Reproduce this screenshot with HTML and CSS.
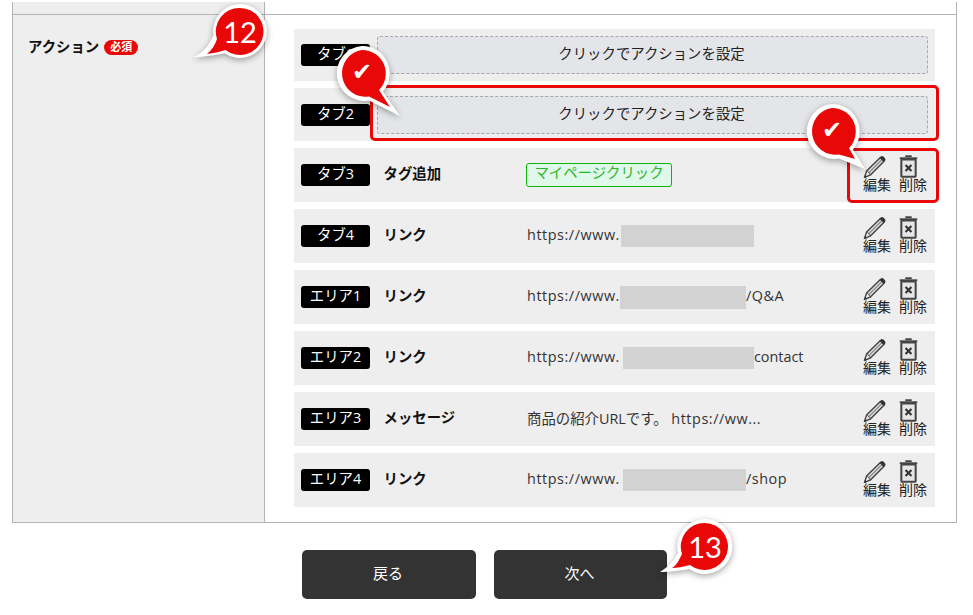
FILE: index.html
```html
<!DOCTYPE html>
<html lang="ja">
<head>
<meta charset="utf-8">
<title>アクション</title>
<link rel="stylesheet" href="styles.css">
</head>
<body>
<svg class="defs" width="0" height="0" aria-hidden="true">
  <defs>
    <symbol id="pencil" viewBox="0 0 24 24">
      <path d="M3.200 16.800 17.600 2.600l3.800 3.800L7.200 20.800z" fill="#d8d8d8" stroke="#444" stroke-width="1.500" stroke-linejoin="round"/>
      <path d="M5.200 18.800 19.400 4.600" stroke="#555" stroke-width="1" fill="none"/>
      <path d="M17.800 1.800c1-1 2.200-1 3.200 0l1.200 1.200c1 1 1 2.200 0 3.200l-1 1-4.400-4.400z" fill="#333"/>
      <path d="M3.200 16.800 1 23.500l6.200-2.700" fill="#eee" stroke="#444" stroke-width="1.500" stroke-linejoin="round"/>
      <path d="M.8 23.700 1.600 20.800l2 2z" fill="#333"/>
    </symbol>
    <symbol id="trash" viewBox="0 0 20 25">
      <path d="M6.500 1.300h7" stroke="#444" stroke-width="2" fill="none"/>
      <path d="M.5 3.600h19" stroke="#444" stroke-width="2.200" fill="none"/>
      <rect x="2.200" y="5" width="15.600" height="18.700" rx="1" fill="#e6e6e6" stroke="#444" stroke-width="2.200"/>
      <path d="M6.800 11l6.400 6.400M13.200 11l-6.400 6.400" stroke="#333" stroke-width="2.300" fill="none"/>
    </symbol>
  </defs>
</svg>

<main class="page">
  <section class="form-table">
    <div class="top-row"><div class="top-head"></div><div></div></div>
    <div class="main-row">
      <div class="head">
        <span class="head-title">アクション</span>
        <span class="required">必須</span>
      </div>
      <div class="list">
        <div class="row row-first">
          <span class="pill">タブ1</span>
          <button class="setter">クリックでアクションを設定</button>
        </div>
        <div class="row row-second">
          <span class="pill">タブ2</span>
          <button class="setter">クリックでアクションを設定</button>
        </div>
        <div class="row">
          <span class="pill">タブ3</span>
          <span class="kind">タグ追加</span>
          <div class="value"><span class="tag">マイページクリック</span></div>
          <div class="actions">
            <a class="act"><svg class="ico-pencil"><use href="#pencil"/></svg><span>編集</span></a>
            <a class="act"><svg class="ico-trash"><use href="#trash"/></svg><span>削除</span></a>
          </div>
        </div>
        <div class="row">
          <span class="pill">タブ4</span>
          <span class="kind">リンク</span>
          <div class="value"><span class="vt url">https://www.</span><span class="mask mask-a"></span></div>
          <div class="actions">
            <a class="act"><svg class="ico-pencil"><use href="#pencil"/></svg><span>編集</span></a>
            <a class="act"><svg class="ico-trash"><use href="#trash"/></svg><span>削除</span></a>
          </div>
        </div>
        <div class="row">
          <span class="pill">エリア1</span>
          <span class="kind">リンク</span>
          <div class="value"><span class="vt url">https://www.</span><span class="mask mask-b"></span><span class="vt url">/Q&amp;A</span></div>
          <div class="actions">
            <a class="act"><svg class="ico-pencil"><use href="#pencil"/></svg><span>編集</span></a>
            <a class="act"><svg class="ico-trash"><use href="#trash"/></svg><span>削除</span></a>
          </div>
        </div>
        <div class="row">
          <span class="pill">エリア2</span>
          <span class="kind">リンク</span>
          <div class="value"><span class="vt url">https://www.</span><span class="mask mask-c"></span><span class="vt">contact</span></div>
          <div class="actions">
            <a class="act"><svg class="ico-pencil"><use href="#pencil"/></svg><span>編集</span></a>
            <a class="act"><svg class="ico-trash"><use href="#trash"/></svg><span>削除</span></a>
          </div>
        </div>
        <div class="row">
          <span class="pill">エリア3</span>
          <span class="kind">メッセージ</span>
          <div class="value"><span class="vt">商品の紹介URLです。 <span class="url">https://ww...</span></span></div>
          <div class="actions">
            <a class="act"><svg class="ico-pencil"><use href="#pencil"/></svg><span>編集</span></a>
            <a class="act"><svg class="ico-trash"><use href="#trash"/></svg><span>削除</span></a>
          </div>
        </div>
        <div class="row">
          <span class="pill">エリア4</span>
          <span class="kind">リンク</span>
          <div class="value"><span class="vt url">https://www.</span><span class="mask mask-d"></span><span class="vt url">/shop</span></div>
          <div class="actions">
            <a class="act"><svg class="ico-pencil"><use href="#pencil"/></svg><span>編集</span></a>
            <a class="act"><svg class="ico-trash"><use href="#trash"/></svg><span>削除</span></a>
          </div>
        </div>
      </div>
    </div>
  </section>
  <div class="buttons">
    <button class="btn btn-back">戻る</button>
    <button class="btn btn-next">次へ</button>
  </div>
</main>

<div class="outline outline-a"></div>
<div class="outline outline-b"></div>

<div class="callout c12">
  <svg viewBox="0 0 80 70" width="80" height="70">
    <path class="bubble-white" d="M51 2a27 27 0 1 1-15.500 49.200C28 53 14 55 5 55 15 50 21 42 24.500 33 A27 27 0 0 1 51 2z"/>
    <path class="bubble-red" d="M51 6a23.500 23.500 0 1 1-14.500 42C31 50 24 51 18 52 23 48 26 43 28 37 A23.500 23.500 0 0 1 51 6z"/>
  </svg>
  <span class="num">12</span>
</div>
<div class="callout c-check1">
  <svg viewBox="0 0 70 76" width="70" height="76">
    <path class="bubble-white" d="M29 1a27.500 27.500 0 0 1 21 45.500L67 71 36 55.500A27.500 27.500 0 1 1 29 1z"/>
    <path class="bubble-red" d="M29 5a23.500 23.500 0 0 1 17 40L57 62 36 51.500A23.500 23.500 0 1 1 29 5z"/>
  </svg>
  <span class="num num-check">✔</span>
</div>
<div class="callout c-check2">
  <svg viewBox="0 0 70 76" width="70" height="76">
    <path class="bubble-white" d="M29 1a27.500 27.500 0 0 1 21 45.500L62 66 36 55.500A27.500 27.500 0 1 1 29 1z"/>
    <path class="bubble-red" d="M29 5a23.500 23.500 0 0 1 17 40L52 56 36 51.500A23.500 23.500 0 1 1 29 5z"/>
  </svg>
  <span class="num num-check">✔</span>
</div>
<div class="callout c13">
  <svg viewBox="0 0 80 70" width="80" height="70">
    <path class="bubble-white" d="M51 2a27.500 27.500 0 1 1-16 50C26 54 14 55 6 55 14 50 20 44 24 36A27.500 27.500 0 0 1 51 2z"/>
    <path class="bubble-red" d="M51 6a23.500 23.500 0 1 1-15 42C29 50 23 51 18 51 23 48 25 43 28 37A23.500 23.500 0 0 1 51 6z"/>
  </svg>
  <span class="num">13</span>
</div>
</body>
</html>
```
FILE: styles.css
```css
* { box-sizing: border-box; }
html, body { margin: 0; padding: 0; background: #fff; }
body {
  width: 973px;
  height: 615px;
  overflow: hidden;
  position: relative;
  font-family: "Open Sans", "Noto Sans CJK JP", sans-serif;
  font-size: 14.4px;
  color: #222;
}
.defs { position: absolute; }
.page { padding: 2px 16px 0 12px; }
.form-table {
  border-left: 1px solid #b4b4b4;
  border-right: 1px solid #b4b4b4;
  border-bottom: 1px solid #b4b4b4;
}
.top-row {
  display: grid;
  grid-template-columns: 252px 1fr;
  height: 13px;
  border-bottom: 1px solid #b4b4b4;
}
.top-head { background: #eee; border-right: 1px solid #b4b4b4; }
.main-row { display: grid; grid-template-columns: 252px 1fr; }
.head {
  background: #eee;
  border-right: 1px solid #b4b4b4;
  padding: 21px 0 0 15px;
  display: flex;
  align-items: flex-start;
  gap: 5px;
}
.head-title { font-weight: 700; font-size: 14.4px; line-height: 21px; color: #111; }
.required {
  background: #e90808;
  color: #fff;
  font-size: 11px;
  font-weight: 700;
  line-height: 14px;
  height: 15px;
  width: 34px;
  text-align: center;
  border-radius: 8px;
  margin-top: 4px;
}
.list {
  padding: 14px 21px 15px 29px;
  display: flex;
  flex-direction: column;
  gap: 7px;
}
.row {
  background: #eee;
  min-height: 54px;
  padding: 0 8px 0 7px;
  display: flex;
  align-items: center;
}
.row-first { min-height: 52px; padding: 7px 7px; }
.row-second { min-height: 53px; padding: 8px 7px 7px; }
.pill {
  width: 69px;
  height: 22px;
  flex: none;
  background: #000;
  color: #fff;
  border-radius: 3px;
  text-align: center;
  line-height: 20px;
  font-size: 14.4px;
}
.setter {
  margin-left: 7px;
  flex: 1;
  height: 38px;
  border: 1px dashed #a3a6ad;
  border-radius: 3px;
  background: #e4e5e9;
  color: #222;
  font: inherit;
  padding: 0 2px 5px 0;
}
.kind {
  margin-left: 13.5px;
  width: 143.5px;
  flex: none;
  font-weight: 700;
  color: #111;
  padding-bottom: 5px;
}
.value { flex: 1; display: flex; align-items: center; white-space: pre; color: #333; }
.vt { padding-bottom: 3px; }
.url { letter-spacing: .55px; }
.tag {
  margin-left: -1px;
  height: 24px;
  width: 146px;
  border: 1px solid #0bb50b;
  border-radius: 3px;
  background: #e0f8ea;
  color: #2bb52b;
  text-align: center;
  line-height: 18px;
}
.mask { display: inline-block; height: 22px; background: #d2d2d3; }
.mask-a { width: 133px; margin-left: 1px; }
.mask-b { width: 126px; height: 23px; }
.mask-c { width: 131px; margin-left: 3px; }
.mask-d { width: 123px; margin-left: 3px; }
.actions { display: flex; gap: 8px; flex: none; padding-bottom: 3px; }
.act {
  display: flex;
  flex-direction: column;
  width: 28px;
  font-size: 14px;
  line-height: 14px;
  color: #222;
}
.act svg { display: block; height: 23px; }
.ico-pencil { width: 24px; }
.ico-trash { width: 19px; }
.buttons {
  display: flex;
  gap: 18px;
  padding: 27px 0 0 290px;
}
.btn {
  border: 0;
  border-radius: 5px;
  background: #333;
  color: #fff;
  font: inherit;
  font-size: 15px;
  height: 49px;
  padding: 0 2px 5px 0;
}
.btn-back { width: 174px; }
.btn-next { width: 173px; }

.outline { position: absolute; border: 3px solid #e90808; border-radius: 5px; }
.outline-a { left: 370px; top: 85px; width: 569px; height: 56px; }
.outline-b { left: 847px; top: 148px; width: 92px; height: 55px; }

.callout { position: absolute; }
.callout svg { display: block; overflow: visible; filter: drop-shadow(0 2px 3px rgba(0,0,0,.35)); }
.bubble-white { fill: #fff; }
.bubble-red { fill: #e90808; }
.num {
  position: absolute;
  color: #fff;
  font-family: Lato, sans-serif;
  font-size: 29px;
  line-height: 1;
  text-align: center;
}
.c12 { left: 189px; top: 2px; }
.c12 .num { left: 27px; top: 15px; width: 48px; }
.c-check1 { left: 333px; top: 45px; }
.c-check2 { left: 803px; top: 103px; }
.num-check { left: 4px; top: 15px; width: 50px; font-size: 24px; font-family: "DejaVu Sans", sans-serif; }
.c13 { left: 654px; top: 517px; }
.c13 .num { left: 27px; top: 15px; width: 48px; }
```
